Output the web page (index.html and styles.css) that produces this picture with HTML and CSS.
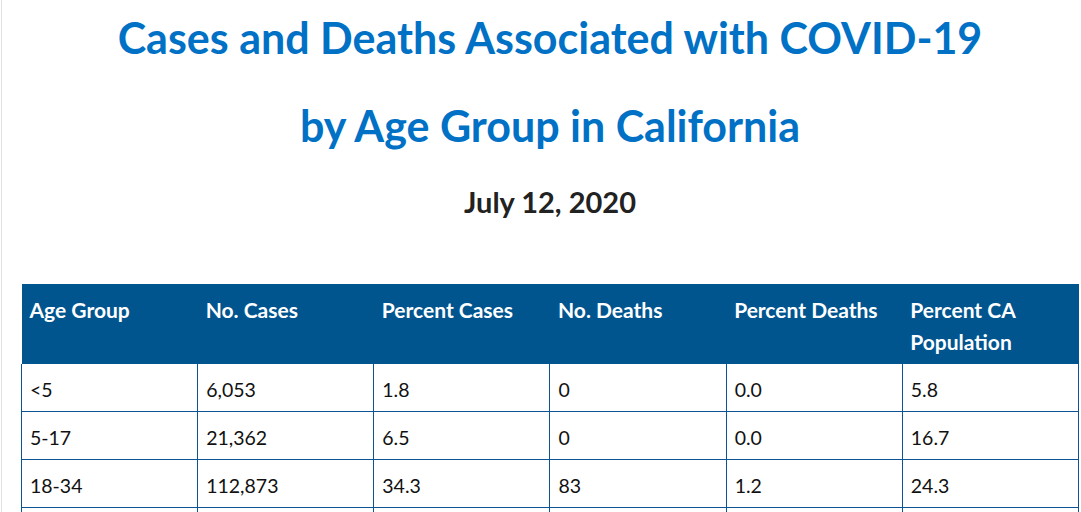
FILE: index.html
```html
<!DOCTYPE html>
<html lang="en">
<head>
<meta charset="utf-8">
<title>Cases and Deaths Associated with COVID-19 by Age Group in California</title>
<link rel="stylesheet" href="styles.css">
</head>
<body>
<main class="page">
  <h1 class="title">Cases and Deaths Associated with COVID-19</h1>
  <h1 class="title">by Age Group in California</h1>
  <h2 class="date">July 12, 2020</h2>
  <table class="data">
    <thead>
      <tr>
        <th>Age Group</th>
        <th>No. Cases</th>
        <th>Percent Cases</th>
        <th>No. Deaths</th>
        <th>Percent Deaths</th>
        <th>Percent CA Population</th>
      </tr>
    </thead>
    <tbody>
      <tr><td>&lt;5</td><td>6,053</td><td>1.8</td><td>0</td><td>0.0</td><td>5.8</td></tr>
      <tr><td>5-17</td><td>21,362</td><td>6.5</td><td>0</td><td>0.0</td><td>16.7</td></tr>
      <tr><td>18-34</td><td>112,873</td><td>34.3</td><td>83</td><td>1.2</td><td>24.3</td></tr>
      <tr><td>35-49</td><td>87,012</td><td>26.4</td><td>375</td><td>5.2</td><td>19.7</td></tr>
    </tbody>
  </table>
</main>
</body>
</html>
```

FILE: styles.css
```css
html, body {
  margin: 0;
  padding: 0;
  background: #ffffff;
}

body {
  font-family: "Lato", "Liberation Sans", sans-serif;
  color: #222222;
}

.page {
  margin-left: 1px;
  border-left: 1px solid #e2e2e2;
  padding: 0 2px 0 19px;
  min-height: 512px;
}

.title {
  margin: 0;
  text-align: center;
  color: #0071c5;
  font-size: 43px;
  font-weight: 700;
  line-height: 88px;
}

.title:first-child {
  margin-top: -6px;
}

.date {
  margin: 12px 0 0;
  text-align: center;
  font-size: 29px;
  font-weight: 700;
  line-height: 40px;
  color: #222222;
}

.data {
  width: 100%;
  margin-top: 62px;
  border-collapse: collapse;
  table-layout: fixed;
}

.data th {
  background: #00558f;
  color: #ffffff;
  text-align: left;
  vertical-align: top;
  font-size: 21px;
  font-weight: 700;
  line-height: 32px;
  padding: 10px 8px 6px 8px;
}

.data td {
  border: 1px solid #0b5394;
  font-size: 19.5px;
  line-height: 31px;
  padding: 10px 8px 6px 8px;
  color: #111111;
}

.data tbody tr:first-child td {
  border-top: none;
}
```
